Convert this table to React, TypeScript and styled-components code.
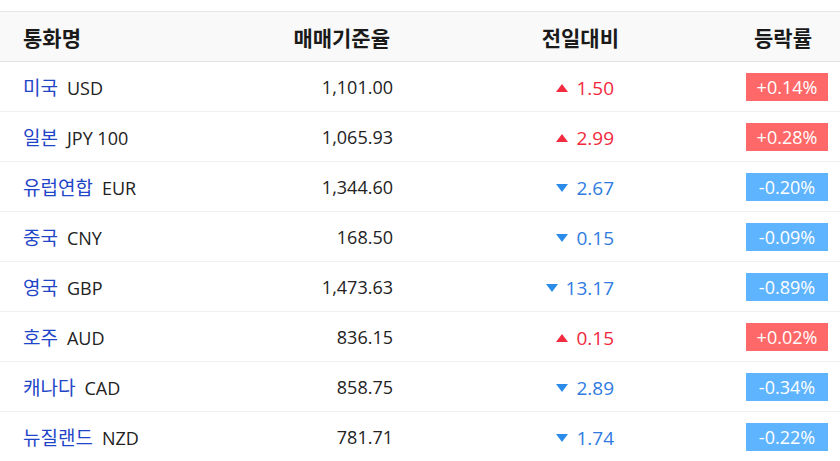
import styled, { createGlobalStyle } from 'styled-components';

const GlobalStyle = createGlobalStyle`
  body {
    margin: 0;
    background: #fff;
    font-family: 'Open Sans', 'Noto Sans CJK KR', sans-serif;
  }
`;

interface IRate {
  name: string;
  code: string;
  rate: string;
  diff: string;
  percent: string;
  up: boolean;
}

const rates: IRate[] = [
  { name: '미국', code: 'USD', rate: '1,101.00', diff: '1.50', percent: '+0.14%', up: true },
  { name: '일본', code: 'JPY 100', rate: '1,065.93', diff: '2.99', percent: '+0.28%', up: true },
  { name: '유럽연합', code: 'EUR', rate: '1,344.60', diff: '2.67', percent: '-0.20%', up: false },
  { name: '중국', code: 'CNY', rate: '168.50', diff: '0.15', percent: '-0.09%', up: false },
  { name: '영국', code: 'GBP', rate: '1,473.63', diff: '13.17', percent: '-0.89%', up: false },
  { name: '호주', code: 'AUD', rate: '836.15', diff: '0.15', percent: '+0.02%', up: true },
  { name: '캐나다', code: 'CAD', rate: '858.75', diff: '2.89', percent: '-0.34%', up: false },
  { name: '뉴질랜드', code: 'NZD', rate: '781.71', diff: '1.74', percent: '-0.22%', up: false },
];

const Wrapper = styled.div`
  padding-top: 11px;
`;

const Table = styled.div`
  border-top: 1px solid #e6e6e6;
`;

const Row = styled.div`
  display: grid;
  grid-template-columns: 200px 170px 221px 1fr;
  align-items: center;
  height: 49px;
  padding: 0 12px 0 23px;
  border-bottom: 1px solid #f0f0f0;
  font-size: 18px;
  color: #222;
`;

const HeaderRow = styled(Row)`
  background: #f9f9f9;
  border-bottom: 1px solid #e4e4e4;
  font-size: 21px;
  font-weight: 700;
  color: #1a1a1a;
`;

const Cell = styled.div<{ align?: 'left' | 'right' | 'center' }>`
  text-align: ${(p) => p.align || 'left'};
  white-space: nowrap;
`;

const HeadBase = styled(Cell)`
  padding-right: 3px;
`;

const HeadDiff = styled(Cell)`
  margin-right: -5px;
`;

const HeadRate = styled(Cell)`
  padding-right: 16px;
`;

const Country = styled.span`
  color: #1f45c8;
  font-size: 19px;
  margin-right: 9px;
`;

const Diff = styled.span<{ up: boolean }>`
  display: inline-flex;
  align-items: center;
  gap: 8px;
  font-size: 19px;
  color: ${(p) => (p.up ? '#f2283c' : '#2f7be2')};
`;

const Arrow = styled.span<{ up: boolean }>`
  width: 0;
  height: 0;
  border-left: 6px solid transparent;
  border-right: 6px solid transparent;
  ${(p) =>
    p.up
      ? 'border-bottom: 8px solid #f22b40;'
      : 'border-top: 8px solid #2a8ce8;'}
`;

const Badge = styled.span<{ up: boolean }>`
  display: inline-block;
  width: 82px;
  height: 28px;
  line-height: 28px;
  text-align: center;
  color: #fff;
  background: ${(p) => (p.up ? '#ff6868' : '#5eb4ff')};
`;

const App = (): JSX.Element => {
  return (
    <Wrapper>
      <GlobalStyle />
      <Table>
        <HeaderRow>
          <Cell>통화명</Cell>
          <HeadBase align="right">매매기준율</HeadBase>
          <HeadDiff align="right">전일대비</HeadDiff>
          <HeadRate align="right">등락률</HeadRate>
        </HeaderRow>
        {rates.map((r) => (
          <Row key={r.code}>
            <Cell>
              <Country>{r.name}</Country>
              {r.code}
            </Cell>
            <Cell align="right">{r.rate}</Cell>
            <Cell align="right">
              <Diff up={r.up}>
                <Arrow up={r.up} />
                {r.diff}
              </Diff>
            </Cell>
            <Cell align="right">
              <Badge up={r.up}>{r.percent}</Badge>
            </Cell>
          </Row>
        ))}
      </Table>
    </Wrapper>
  );
};

export default App;
